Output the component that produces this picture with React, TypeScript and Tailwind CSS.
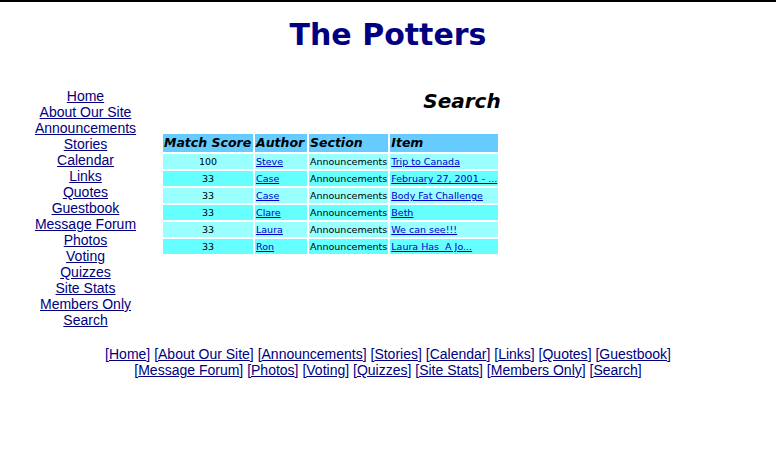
import React from "react";

const navLinks = [
  "Home",
  "About Our Site",
  "Announcements",
  "Stories",
  "Calendar",
  "Links",
  "Quotes",
  "Guestbook",
  "Message Forum",
  "Photos",
  "Voting",
  "Quizzes",
  "Site Stats",
  "Members Only",
  "Search",
];

const results = [
  { score: 100, author: "Steve", section: "Announcements", item: "Trip to Canada" },
  { score: 33, author: "Case", section: "Announcements", item: "February 27, 2001 - ..." },
  { score: 33, author: "Case", section: "Announcements", item: "Body Fat Challenge" },
  { score: 33, author: "Clare", section: "Announcements", item: "Beth" },
  { score: 33, author: "Laura", section: "Announcements", item: "We can see!!!" },
  { score: 33, author: "Ron", section: "Announcements", item: "Laura Has  A Jo..." },
];

const verdana = "font-['Verdana','DejaVu_Sans',sans-serif]";
const arial = "font-['Liberation_Sans',Arial,sans-serif]";

function SideNav() {
  return (
    <div className={`w-[155px] ml-2 flex flex-col items-center text-[14px] leading-[16px] ${arial}`}>
      {navLinks.map((link) => (
        <a key={link} href="#" className="text-[#000080] underline">
          {link}
        </a>
      ))}
    </div>
  );
}

function ResultsTable() {
  return (
    <table className={`border-separate border-spacing-[2px] -ml-[2px] ${verdana}`}>
      <thead>
        <tr className="bg-[#66ccff] text-[12.5px] leading-[18px] font-bold italic text-left whitespace-nowrap">
          <th className="w-[90px] px-px">Match Score</th>
          <th className="w-[52px] px-px">Author</th>
          <th className="w-[78px] px-px">Section</th>
          <th className="w-[104px] px-px">Item</th>
        </tr>
      </thead>
      <tbody className="text-[9.5px] leading-[15px]">
        {results.map((row, i) => (
          <tr key={i} className={i % 2 === 0 ? "bg-[#99ffff]" : "bg-[#66ffff]"}>
            <td className="text-center">{row.score}</td>
            <td className="px-px">
              <a href="#" className="text-[#0000cc] underline">{row.author}</a>
            </td>
            <td className="px-px">{row.section}</td>
            <td className="px-px whitespace-nowrap">
              <a href="#" className="text-[#0000cc] underline whitespace-pre">{row.item}</a>
            </td>
          </tr>
        ))}
      </tbody>
    </table>
  );
}

function Footer() {
  return (
    <div className={`mt-[18px] text-center text-[14px] leading-[16px] text-[#000080] ${arial}`}>
      <div className="w-[600px] mx-auto">
        {navLinks.map((link, i) => (
          <React.Fragment key={link}>
            [<a href="#" className="underline">{link}</a>]{i < navLinks.length - 1 ? " " : ""}
          </React.Fragment>
        ))}
      </div>
    </div>
  );
}

export default function App() {
  return (
    <div className="w-[776px] h-[457px] bg-white border-t-2 border-black overflow-hidden">
      <h1 className={`text-center text-[30px] leading-[36px] font-bold text-[#000080] mt-[15px] ${verdana}`}>
        The Potters
      </h1>
      <div className="flex mt-[35px]">
        <SideNav />
        <div className="w-[598px]">
          <h2 className={`text-center text-[20px] leading-[24px] font-bold italic mt-[1px] ${verdana}`}>
            Search
          </h2>
          <div className="mt-[19px]">
            <ResultsTable />
          </div>
        </div>
      </div>
      <Footer />
    </div>
  );
}
